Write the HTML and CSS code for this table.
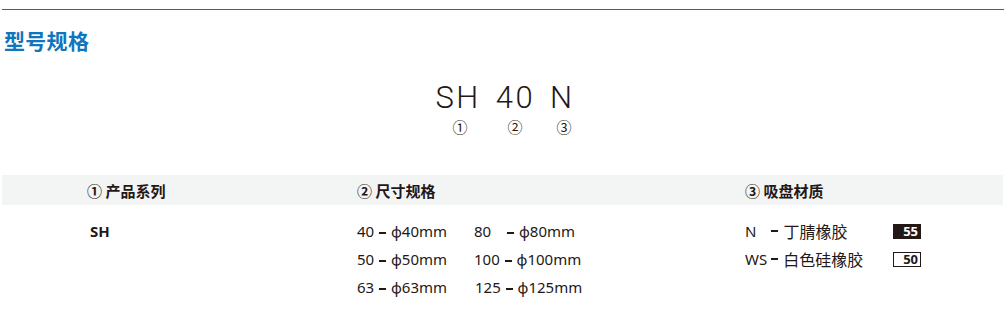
FILE: index.html
```html
<!DOCTYPE html>
<html lang="zh">
<head>
<meta charset="utf-8">
<link rel="stylesheet" href="styles.css">
</head>
<body>
<div class="page">
  <div class="rule"></div>
  <h2 class="title">型号规格</h2>
  <div class="code">
    <div class="code-row">
      <span class="part p1">SH</span>
      <span class="part p2">40</span>
      <span class="part p3">N</span>
    </div>
    <div class="num-row">
      <span class="num n1">①</span>
      <span class="num n2">②</span>
      <span class="num n3">③</span>
    </div>
  </div>
  <div class="table">
    <div class="head">
      <div class="c1">① 产品系列</div>
      <div class="c2">② 尺寸规格</div>
      <div class="c3">③ 吸盘材质</div>
    </div>
    <div class="body">
      <div class="c1"><div class="series">SH</div></div>
      <div class="c2">
        <div class="sizes">
          <div class="size">40 <span class="dash"></span> ϕ40mm</div>
          <div class="size b">80 <span class="dash wide"></span> ϕ80mm</div>
          <div class="size">50 <span class="dash"></span> ϕ50mm</div>
          <div class="size b">100 <span class="dash"></span> ϕ100mm</div>
          <div class="size">63 <span class="dash"></span> ϕ63mm</div>
          <div class="size b shift">125 <span class="dash"></span> ϕ125mm</div>
        </div>
      </div>
      <div class="c3">
        <div class="mat">
          <span class="mname"><span class="lat">N</span><span class="dash wide"></span><span class="cjk">丁腈橡胶</span></span>
          <span class="badge dark">55</span>
        </div>
        <div class="mat">
          <span class="mname"><span class="lat">WS</span><span class="dash"></span><span class="cjk">白色硅橡胶</span></span>
          <span class="badge light">50</span>
        </div>
      </div>
    </div>
  </div>
</div>
</body>
</html>
```

FILE: styles.css
```css
* { box-sizing: border-box; margin: 0; padding: 0; }
html, body { background: #fff; }
body {
  font-family: "Noto Sans CJK SC", "Noto Sans", sans-serif;
  color: #231815;
}
.page {
  width: 1006px;
  height: 310px;
  padding-top: 9px;
}
.rule {
  height: 1px;
  margin: 0 2px 0 2px;
  background: #0f6fb5;
}
.title {
  margin: 17px 0 0 4px;
  font-size: 21px;
  line-height: 26px;
  font-weight: 700;
  color: #0f75bd;
  letter-spacing: 0.3px;
}
.code {
  margin-top: 27px;
  display: flex;
  flex-direction: column;
  align-items: center;
}
.code-row {
  display: flex;
  gap: 15px;
  margin-left: 4px;
  font-family: Roboto, "Noto Sans", sans-serif;
  font-weight: 300;
  font-size: 31px;
  line-height: 36px;
  letter-spacing: 2.5px;
  color: #231815;
}
.num-row {
  display: flex;
  margin-left: 12px;
  font-size: 15px;
  line-height: 22px;
}
.num { text-align: center; }
.num.n1 { width: 60px; }
.num.n2 { width: 50px; }
.num.n3 { width: 48px; }
.table {
  margin: 37px 3px 0 2px;
}
.head {
  display: grid;
  grid-template-columns: 355px 388px 1fr;
  background: #f3f4f4;
  height: 30px;
  align-items: center;
  font-size: 15px;
  font-weight: 700;
}
.head .c1, .body .c1 { padding-left: 85px; }
.body {
  display: grid;
  grid-template-columns: 355px 388px 1fr;
  padding-top: 12px;
}
.series {
  font-family: "Noto Sans", sans-serif;
  font-weight: 700;
  font-size: 15px;
  line-height: 28px;
  padding-left: 3px;
}
.sizes {
  display: grid;
  grid-template-columns: 117px auto;
  font-family: "Noto Sans", sans-serif;
  font-size: 15px;
  line-height: 28px;
}
.size { white-space: nowrap; }
.size.shift { padding-left: 1px; }
.dash {
  display: inline-block;
  width: 7px;
  height: 2px;
  background: #231815;
  vertical-align: middle;
  margin: 0 1px;
}
.dash.wide { margin-left: 12px; }
.mat {
  display: flex;
  align-items: center;
  height: 28px;
}
.mat .mname {
  width: 148px;
  white-space: nowrap;
  display: flex;
  align-items: center;
}
.lat { font-family: "Noto Sans", sans-serif; font-size: 15px; }
.cjk { font-size: 16px; }
.mat .mname .dash { margin: 0 5px 0 4px; }
.mat .mname .dash.wide { margin-left: 15px; }
.badge {
  display: inline-block;
  width: 28px;
  height: 15px;
  font-family: "Noto Sans", sans-serif;
  font-size: 13px;
  font-weight: 700;
  line-height: 13px;
  text-align: right;
  padding-right: 2px;
}
.badge.dark { background: #231815; color: #fff; border: 1px solid #231815; }
.badge.light { background: #fff; color: #231815; border: 1px solid #231815; }
```
